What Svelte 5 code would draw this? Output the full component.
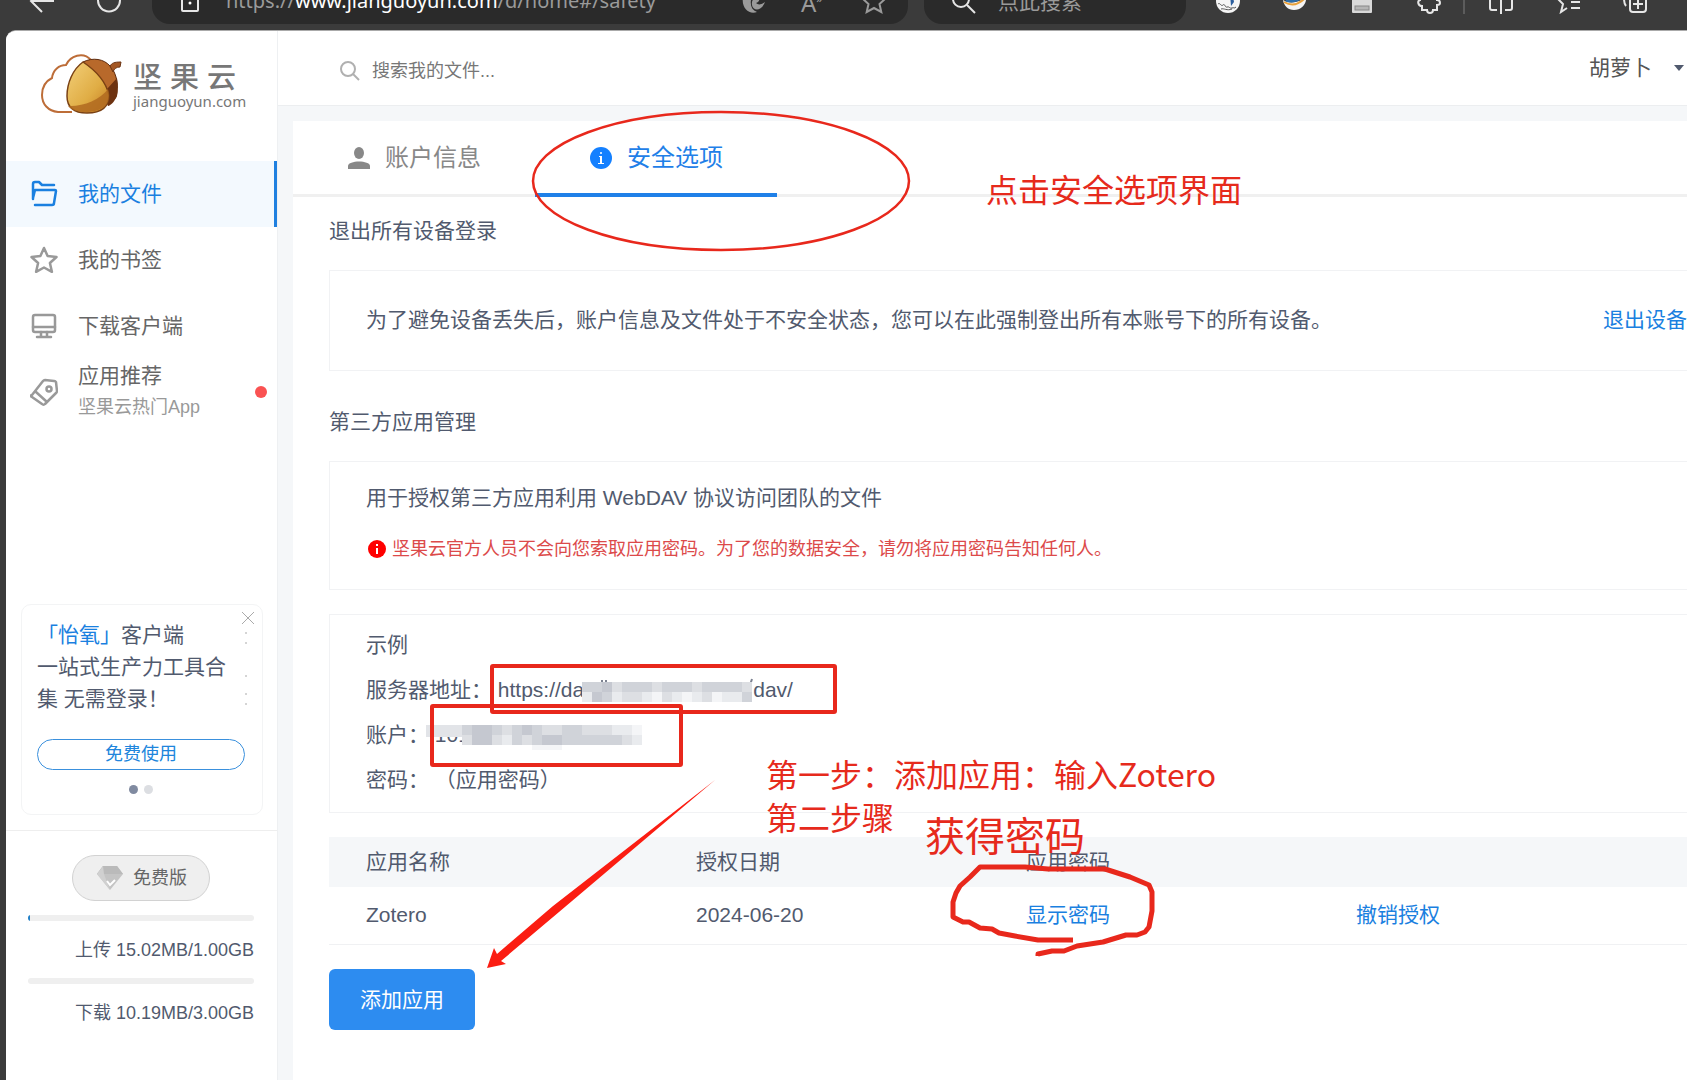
<script lang="ts">
	type NavItem = { icon: string; label: string; sub?: string; dot?: boolean };

	const nav: NavItem[] = [
		{ icon: 'folder', label: '我的文件' },
		{ icon: 'star', label: '我的书签' },
		{ icon: 'screen', label: '下载客户端' },
		{ icon: 'tag', label: '应用推荐', sub: '坚果云热门App', dot: true },
	];

	const usage = [
		{ label: '上传', used: '15.02MB', total: '1.00GB', percent: 1 },
		{ label: '下载', used: '10.19MB', total: '3.00GB', percent: 0 },
	];

	const apps = [{ name: 'Zotero', date: '2024-06-20' }];

	let activeNav = $state('我的文件');
	let activeTab = $state('safety');

	// grey tones of the blurred-out blocks, one digit per cell
	const tones = ['#f4f5f7', '#e9ebee', '#dddfe3', '#d0d3d9', '#c5c8d0'];
	const urlMosaic = ['33423332333233332', '14312210210120113'];
	const userMosaic = ['344323432233222110', '244213234433333321', '.......000........'];
</script>

{#snippet mosaic(rows: string[], left: number, top: number)}
	{#each rows as row, y}
		{#each row.split('') as tone, x}
			{#if tone !== '.'}
				<rect x={left + x * 10} y={top + y * 10} width="10" height={y < 2 ? 10 : 5} fill={tones[+tone]} />
			{/if}
		{/each}
	{/each}
{/snippet}

<div class="window">
	<div class="toolbar">
		<button class="tool back" aria-label="后退">
			<svg width="26" height="26" viewBox="0 0 26 26"><path d="M25 13H2M13 2 2 13l11 11" /></svg>
		</button>
		<button class="tool reload" aria-label="刷新">
			<svg width="26" height="26" viewBox="0 0 26 26"><path d="M20 4a11 11 0 1 1-14 0" /></svg>
		</button>
		<div class="address">
			<svg class="lock" width="20" height="26" viewBox="0 0 20 26">
				<path d="M5 8V5a5 5 0 0 1 10 0v3M3 8h14a1 1 0 0 1 1 1v13a1 1 0 0 1-1 1H3a1 1 0 0 1-1-1V9a1 1 0 0 1 1-1z" />
				<circle cx="10" cy="15" r="1.5" fill="#fff" stroke="none" />
			</svg>
			<span class="url">https://<b>www.jianguoyun.com</b>/d/home#/safety</span>
			<svg class="dim" width="26" height="26" viewBox="0 0 26 26">
				<path d="M2 9c3 1 6 1 8 3-1 6 1 10 6 12C8 27 0 20 2 9z" fill="#9a9a9a" stroke="none" />
				<path d="M11 17c1 6 9 7 13-3-4 3-7 3-9 1 3-1 4-3 3-6-3-1-8 2-7 8z" fill="#9a9a9a" stroke="none" />
				<path d="M4 7c5-4 11-1 11 3h9C23 2 9-2 4 7z" fill="#9a9a9a" stroke="none" />
			</svg>
			<span class="reader">A<sup>»</sup></span>
			<svg class="dim" width="26" height="26" viewBox="0 0 26 26">
				<path d="m13 2 3.500 7.500 8 1-6 5.500 1.800 8L13 20l-7.300 4 1.800-8-6-5.500 8-1z" />
			</svg>
		</div>
		<div class="quick">
			<svg width="26" height="26" viewBox="0 0 26 26"><circle cx="10" cy="11" r="8" /><path d="m16 17 8 8" /></svg>
			<span>点此搜索</span>
		</div>
		<div class="tools">
			<button class="tool" aria-label="扩展 1">
				<svg width="26" height="26" viewBox="0 0 26 26">
					<circle cx="13" cy="13" r="12" fill="#f5f5f5" stroke="none" />
					<path d="M17 4l2 10-3 4-1-12z" fill="#2c5f9e" stroke="none" />
					<path d="M3 16c2-2 3 3 5 1s2 3 4 2 3 2 5 1 2 1 4-1M6 21c3-1 6 2 11 0" stroke="#555" stroke-width="1" />
				</svg>
			</button>
			<button class="tool" aria-label="扩展 2">
				<svg width="26" height="26" viewBox="0 0 26 26">
					<path d="M1 12c6 4 16 3 23-3 1 6-4 13-12 13-6 0-10-4-11-10z" fill="#f4f4f4" stroke="none" />
					<path d="M2 14c7 4 15 3 22-5" stroke="#e9a13a" stroke-width="2" />
					<path d="M4 12c5 2 12 1 16-4" stroke="#2c6da8" stroke-width="3" />
				</svg>
			</button>
			<button class="tool" aria-label="扩展 3">
				<svg width="26" height="26" viewBox="0 0 26 26">
					<rect x="3" y="1" width="20" height="24" rx="1" fill="#d9d9d9" stroke="none" />
					<rect x="6" y="18" width="14" height="4" fill="#b5b5b5" stroke="#888" stroke-width="1" />
				</svg>
			</button>
			<button class="tool" aria-label="扩展">
				<svg width="26" height="26" viewBox="0 0 26 26">
					<path d="M4 6h5a3 3 0 0 1 7 0h5v6a3 3 0 0 1 3 3c0 2-2 2-3 2v5h-4c0 4-6 4-6 0H6v-4c-4 0-5-5-2-6z" />
				</svg>
			</button>
			<span class="rule"></span>
			<button class="tool" aria-label="分屏">
				<svg width="26" height="26" viewBox="0 0 26 26">
					<path d="M9 3H4a2 2 0 0 0-2 2v15a2 2 0 0 0 2 2h5M17 3h5a2 2 0 0 1 2 2v15a2 2 0 0 1-2 2h-5M13 0v26" />
				</svg>
			</button>
			<button class="tool" aria-label="收藏夹">
				<svg width="26" height="26" viewBox="0 0 26 26">
					<path d="m12 20-6 4 2-8-6-6 8-1 3-7 3 7M16 14h9M16 20h9" />
				</svg>
			</button>
			<button class="tool" aria-label="集锦">
				<svg width="26" height="26" viewBox="0 0 26 26">
					<rect x="8" y="8" width="16" height="16" rx="3" /><path d="M16 12v9M11 16h10M4 18c-2-2-2-4-2-8" />
				</svg>
			</button>
		</div>
	</div>

	<div class="page">
		<aside class="sidebar">
			<a class="logo" href="#/home">
				<svg width="84" height="62" viewBox="0 0 84 62">
					<defs>
						<linearGradient id="nut" x1="0" y1="0" x2="1" y2="1">
							<stop offset="0" stop-color="#f3d07a" />
							<stop offset="0.600" stop-color="#e0ad45" />
							<stop offset="1" stop-color="#c47a20" />
						</linearGradient>
					</defs>
					<path d="M31 59H17C7 58 1 51 1 42c0-8 4-14 10-17 1-8 7-13 14-13 4-9 17-14 25-5" fill="none" stroke="#bd6d38" stroke-width="2" />
					<path d="M44 9c4-3 16-4 24 3 8 8 10 21 8 31-2 4-5 9-9 10z" fill="#6d3210" />
					<path d="M42 9c10-5 21-3 27 4 5 5 8 15 7 22L66 37C60 27 52 16 42 9z" fill="#b8692b" stroke="#5f2d10" stroke-width="1" />
					<path d="m66 36 10-11c1 8 1 16-1 20l-8 8c2-6 1-12-1-17z" fill="#6d3210" />
					<path d="M69 13c2-3 4-4 11-4l-1 5c-4 0-6 2-7 5z" fill="#a45722" stroke="#6d3514" stroke-width="1" />
					<path d="M42 9C32 16 26 30 26 43c0 12 7 17 20 17 14 0 22-6 22-18C65 29 54 17 42 9z" fill="url(#nut)" stroke="#7a4114" stroke-width="1.500" />
					<path d="M27 53c14 1 32-6 40-17 2 8 1 14-4 18-8 6-28 8-36-1z" fill="#b06a20" opacity="0.850" />
				</svg>
				<span class="brand">
					<span class="brand-name">坚 果 云</span>
					<span class="brand-host">jianguoyun.com</span>
				</span>
			</a>

			<nav>
				{#each nav as item}
					<a href="#/{item.icon}" class="nav-item" class:active={activeNav === item.label} onclick={() => (activeNav = item.label)}>
						<svg width="28" height="28" viewBox="0 0 28 28">
							{#if item.icon === 'folder'}
								<path d="M3 19V4a2 2 0 0 1 2-2h4l3 3h12M3 18l2-8h20a1 1 0 0 1 1 1l-2 12a2 2 0 0 1-2 2H5" />
							{:else if item.icon === 'star'}
								<path d="m14 2 3.600 8 8.900 1-6.600 6 2 8.800L14 21.500l-7.900 4.300 2-8.800L1.500 11l8.900-1z" />
							{:else if item.icon === 'screen'}
								<rect x="3" y="3" width="22" height="17" rx="2" /><path d="M3 15h22M11 20v5M17 20v5M7 25h14" />
							{:else}
								<path d="M2 17 13 3a3 3 0 0 1 2-1l9 1a2 2 0 0 1 2 1l1 9a3 3 0 0 1-1 2L15 26a2 2 0 0 1-3 0L2 19a1 1 0 0 1 0-2zM6 14l11 10" />
								<circle cx="19" cy="11" r="2.500" />
							{/if}
						</svg>
						<span class="nav-text">
							{item.label}
							{#if item.sub}<small>{item.sub}</small>{/if}
						</span>
						{#if item.dot}<i class="dot"></i>{/if}
					</a>
				{/each}
			</nav>

			<section class="promo">
				<button class="close" aria-label="关闭">
					<svg width="14" height="14" viewBox="0 0 14 14"><path d="m1 1 12 12M13 1 1 13" /></svg>
				</button>
				<p><em>「怡氧」</em>客户端<br />一站式生产力工具合集 无需登录！</p>
				<svg class="peek" width="2" height="76" viewBox="0 0 2 76">
					<path d="M1 2v2M1 12v2M1 45v2M1 63v2M1 73v2" stroke="#aaa" />
				</svg>
				<button class="try">免费使用</button>
				<div class="pager"><i class="on"></i><i></i></div>
			</section>

			<section class="storage">
				<button class="plan">
					<svg width="28" height="26" viewBox="0 0 28 26">
						<path d="M7 1h14l6 8-13 16L1 9z" fill="#c4c4c4" />
						<path d="M7 1h14l6 8H1z" fill="#bababa" />
						<path d="m7 1-6 8 13 16-6-16z" fill="#d0d0d0" />
						<path d="m11 16 3 4 5-5" fill="none" stroke="#fff" stroke-width="2" />
					</svg>
					免费版
				</button>
				{#each usage as u}
					<div class="bar"><div class="fill" style="width: {u.percent}%"></div></div>
					<p>{u.label} {u.used}/{u.total}</p>
				{/each}
			</section>
		</aside>

		<div class="main">
			<header>
				<label class="search">
					<svg width="20" height="20" viewBox="0 0 20 20"><circle cx="8" cy="8" r="7" /><path d="m13 13 6 6" /></svg>
					<input type="text" placeholder="搜索我的文件..." aria-label="搜索我的文件" />
				</label>
				<button class="user">胡萝卜<i class="caret"></i></button>
			</header>

			<main>
				<div class="card">
					<div class="tabs">
						<button class:active={activeTab === 'account'} onclick={() => (activeTab = 'account')}>
							<svg width="24" height="24" viewBox="0 0 24 24">
								<ellipse cx="12" cy="7" rx="5" ry="6" /><path d="M1 23v-3c0-6 22-6 22 0v3z" />
							</svg>
							账户信息
						</button>
						<button class:active={activeTab === 'safety'} onclick={() => (activeTab = 'safety')}>
							<svg width="24" height="24" viewBox="0 0 24 24">
								<circle cx="12" cy="12" r="11" />
								<path d="M10 10h3v7h2v1h-6v-1h2v-6h-1z" fill="#fff" /><circle cx="12" cy="7" r="1" fill="#fff" />
							</svg>
							安全选项
						</button>
					</div>

					<div class="content">
						<h2>退出所有设备登录</h2>
						<div class="box logout">
							<span>为了避免设备丢失后，账户信息及文件处于不安全状态，您可以在此强制登出所有本账号下的所有设备。</span>
							<a href="#/logout">退出设备</a>
						</div>

						<h2 class="second">第三方应用管理</h2>
						<div class="box intro">
							<p>用于授权第三方应用利用 WebDAV 协议访问团队的文件</p>
							<p class="warn">
								<svg width="18" height="18" viewBox="0 0 18 18">
									<circle cx="9" cy="9" r="9" fill="#f00" /><path d="M8 8h2v6H8zM8 4h2v2H8z" fill="#fff" />
								</svg>
								坚果云官方人员不会向您索取应用密码。为了您的数据安全，请勿将应用密码告知任何人。
							</p>
						</div>

						<div class="box sample">
							<p>示例</p>
							<p>
								服务器地址： https://da<svg class="mask" width="169" height="20">
									<path d="M18 -1v2M22 -1v2M166 4l2-6" stroke="#7c8291" stroke-width="2" />
									{@render mosaic(urlMosaic, -2, 1)}
								</svg>dav/
							</p>
							<p>
								账户： 101<svg class="mask" width="180" height="20">
									<rect x="-44" y="-1" width="38" height="12" fill="#e2e4e8" />
									{@render mosaic(userMosaic, -8, -1)}
								</svg>
							</p>
							<p>密码： （应用密码）</p>
						</div>

						<table>
							<thead>
								<tr><th>应用名称</th><th>授权日期</th><th>应用密码</th><th></th></tr>
							</thead>
							<tbody>
								{#each apps as app (app.name)}
									<tr>
										<td>{app.name}</td>
										<td>{app.date}</td>
										<td><a href="#/show">显示密码</a></td>
										<td><a href="#/revoke">撤销授权</a></td>
									</tr>
								{/each}
							</tbody>
						</table>

						<button class="add">添加应用</button>
					</div>
				</div>
			</main>
		</div>
	</div>

	<!-- hand-drawn notes over the page -->
	<div class="notes">
		<svg width="100%" height="100%">
			<ellipse cx="721" cy="181" rx="188" ry="69" stroke-width="2.5" />
			<rect x="492" y="666" width="343" height="46" rx="1" stroke-width="4" />
			<rect x="432" y="706" width="249" height="59" rx="1" stroke-width="4" />
			<path class="solid" d="m487 968 7-20 3 6 56-48L715 780 559 912l-58 49 5 3z" />
			<path
				stroke-width="5"
				d="M1073 940h-35l-23-4-16-3-7-4-12-1-11-6h-6l-10-5v-15l3-9 4-7 10-9 10-10h45l23 2h57l25 8 19 8 3 7v19l-3 16-4 5-8 3h-11l-23 7-26 4-13 5h-12l-14 3v2"
			/>
		</svg>
		<span class="note tab-note">点击安全选项界面</span>
		<span class="note step-note">第一步：添加应用：输入Zotero<br />第二步骤</span>
		<span class="note password-note">获得密码</span>
	</div>
</div>

<style>
	:global(body) {
		margin: 0;
		background: #3b3b3b;
	}
	.window {
		position: relative;
		min-height: 100vh;
		display: flex;
		flex-direction: column;
		overflow: hidden;
		background: #3b3b3b;
		color: #515a6e;
		font-family: 'Liberation Sans', 'Noto Sans CJK SC', sans-serif;
		font-size: 21px;
		line-height: 30px;
	}
	p, h2 {
		margin: 0;
		font-size: inherit;
		font-weight: 400;
	}
	a {
		color: #1a80e0;
		text-decoration: none;
	}
	button {
		padding: 0;
		border: 0;
		background: none;
		color: inherit;
		font: inherit;
		cursor: pointer;
	}
	svg {
		flex: none;
	}

	/* browser toolbar, its upper half is scrolled out of view */
	.toolbar {
		display: flex;
		align-items: center;
		height: 46px;
		margin-top: -22px;
		padding: 0 19px 6px 29px;
	}
	.toolbar svg {
		fill: none;
		stroke: #e6e6e6;
		stroke-width: 2;
	}
	.tool {
		display: flex;
		justify-content: center;
	}
	.reload {
		margin: 0 30px 0 41px;
	}
	.address, .quick {
		display: flex;
		align-items: center;
		box-sizing: border-box;
		height: 46px;
		border-radius: 18px;
		background: #2a2a2a;
		color: #9a9a9a;
		font-family: 'Noto Sans', 'Noto Sans CJK SC', sans-serif;
	}
	.address {
		flex: 1;
		gap: 34px;
		padding: 0 21px 0 28px;
	}
	.toolbar .dim {
		stroke: #9a9a9a;
	}
	.url {
		flex: 1;
		margin-left: -8px;
		font-size: 20px;
	}
	.url b {
		color: #fff;
		font-weight: 400;
	}
	.reader {
		width: 26px;
		font-size: 24px;
	}
	.reader sup {
		font-size: 12px;
	}
	.quick {
		width: 262px;
		gap: 21px;
		margin: 0 8px 0 16px;
		padding-left: 27px;
	}
	.tools {
		display: flex;
		align-items: center;
	}
	.tools .tool {
		width: 67px;
	}
	.rule {
		width: 2px;
		height: 26px;
		margin: 0 2px 0 1px;
		background: #5c5c5c;
	}

	.page {
		flex: 1;
		display: flex;
		margin-left: 6px;
		border-top: 1px solid #aaa;
		border-top-left-radius: 10px;
		overflow: hidden;
		background: #fff;
	}

	.sidebar {
		width: 271px;
		flex: none;
		display: flex;
		flex-direction: column;
		border-right: 1px solid #eef0f2;
		background: #fff;
	}
	.logo {
		display: flex;
		gap: 8px;
		padding: 22px 0 46px 35px;
		color: #777;
	}
	.brand {
		display: flex;
		flex-direction: column;
		padding-top: 4px;
	}
	.brand-name {
		font-size: 29px;
		line-height: 42px;
		font-weight: 500;
	}
	.brand-host {
		font-family: 'Noto Sans', sans-serif;
		font-size: 15px;
		line-height: 4px;
	}
	.nav-item {
		display: flex;
		align-items: center;
		gap: 20px;
		height: 66px;
		box-sizing: border-box;
		padding: 0 10px 0 24px;
		color: #666;
	}
	.nav-item svg {
		fill: none;
		stroke: #999;
		stroke-width: 2.5;
		stroke-linejoin: round;
		stroke-linecap: round;
	}
	.nav-item.active {
		border-right: 3px solid #1f80e0;
		background: #f3f9fe;
		color: #1a80e0;
	}
	.nav-item.active svg {
		stroke: #1a80e0;
	}
	.nav-text {
		flex: 1;
	}
	.nav-text small {
		display: block;
		color: #999;
		font-size: 18px;
		line-height: 32px;
	}
	.dot {
		width: 12px;
		height: 12px;
		border-radius: 50%;
		background: #fa5252;
	}

	.promo {
		position: relative;
		margin: auto 14px 15px 15px;
		padding: 14px 17px 20px 15px;
		border: 1px solid #f3f4f5;
		border-radius: 10px;
	}
	.promo p {
		width: 192px;
		line-height: 32px;
	}
	.promo em {
		color: #1a80e0;
		font-style: normal;
	}
	.close {
		position: absolute;
		top: 6px;
		right: 7px;
		line-height: 0;
	}
	.close svg {
		stroke: #aaa;
	}
	.peek {
		position: absolute;
		top: 25px;
		right: 15px;
	}
	.try {
		width: 100%;
		margin-top: 24px;
		border: 1px solid #3a90dd;
		border-radius: 16px;
		color: #2085dc;
		font-size: 18px;
		line-height: 29px;
	}
	.pager {
		display: flex;
		justify-content: center;
		gap: 6px;
		margin-top: 15px;
	}
	.pager i {
		width: 9px;
		height: 9px;
		border-radius: 50%;
		background: #dcdee2;
	}
	.pager .on {
		background: #808aa0;
	}

	.storage {
		display: flex;
		flex-direction: column;
		padding: 24px 23px 52px 22px;
		border-top: 1px solid #eee;
		font-size: 18px;
	}
	.plan {
		display: flex;
		align-items: center;
		align-self: center;
		gap: 9px;
		height: 46px;
		margin: 0 0 14px;
		padding: 0 22px 0 23px;
		border: 1px solid #d2d2d2;
		border-radius: 23px;
		background: #efefef;
		color: #666;
	}
	.bar {
		height: 6px;
		border-radius: 3px;
		overflow: hidden;
		background: #efefef;
	}
	.fill {
		height: 6px;
		background: #2080c8;
	}
	.storage p {
		padding: 14px 0 13px;
		text-align: right;
	}
	.storage p:last-child {
		padding-bottom: 0;
	}

	.main {
		flex: 1;
		min-width: 0;
		display: flex;
		flex-direction: column;
	}
	header {
		display: flex;
		align-items: center;
		justify-content: space-between;
		height: 74px;
		padding: 0 3px 0 62px;
		border-bottom: 1px solid #eceef0;
	}
	.search {
		display: flex;
		align-items: center;
		gap: 12px;
		padding-top: 5px;
	}
	.search svg {
		fill: none;
		stroke: #b0b0b0;
		stroke-width: 2;
	}
	.search input {
		width: 400px;
		padding: 0;
		border: 0;
		outline: 0;
		font: inherit;
		font-size: 18px;
	}
	.search input::placeholder {
		color: #777;
	}
	.user {
		display: flex;
		align-items: center;
		gap: 22px;
		color: #555;
	}
	.caret {
		border: 5px solid transparent;
		border-top: 6px solid #515a6e;
		border-bottom: 0;
	}
	main {
		flex: 1;
		display: flex;
		padding: 15px 0 0 15px;
		background: #f5f7f9;
	}
	.card {
		flex: 1;
		min-width: 0;
		background: #fff;
	}
	.tabs {
		display: flex;
		border-bottom: 3px solid #f0f0f0;
	}
	.tabs button {
		display: flex;
		align-items: center;
		justify-content: center;
		gap: 14px;
		width: 242px;
		height: 76px;
		margin-bottom: -3px;
		padding-top: 2px;
		border-bottom: 4px solid transparent;
		color: #888;
		font-size: 24px;
	}
	.tabs svg {
		fill: #888;
	}
	.tabs .active {
		border-bottom-color: #1f80e8;
		color: #1f80e8;
	}
	.tabs .active svg {
		fill: #1480ff;
	}
	.content {
		padding: 19px 0 24px 36px;
	}
	h2 {
		margin-bottom: 24px;
	}
	.second {
		margin-top: 36px;
	}
	.box {
		border: 1px solid #f1f2f4;
		border-right: 0;
		padding-left: 36px;
	}
	.logout {
		display: flex;
		justify-content: space-between;
		padding-top: 34px;
		padding-bottom: 35px;
	}
	.intro {
		padding-top: 21px;
		padding-bottom: 26px;
	}
	.warn {
		display: flex;
		align-items: center;
		gap: 6px;
		margin-top: 22px;
		padding-left: 2px;
		color: #dc4a4a;
		font-size: 18px;
		line-height: 28px;
	}
	.sample {
		margin: 24px 0;
		padding-top: 7px;
		padding-bottom: 10px;
		line-height: 45px;
	}
	.mask {
		position: relative;
		overflow: visible;
		vertical-align: middle;
	}
	table {
		width: 100%;
		table-layout: fixed;
		border-collapse: collapse;
	}
	th, td {
		width: 293px;
		padding: 10px 0 10px 37px;
		font-weight: 400;
		text-align: left;
	}
	th:last-child {
		width: auto;
	}
	thead {
		background: #f5f7f9;
	}
	td {
		padding-top: 13px;
		padding-bottom: 14px;
		border-bottom: 1px solid #f0f1f3;
	}
	.add {
		margin-top: 24px;
		padding: 0 31px;
		border-radius: 6px;
		background: #2d8cf0;
		color: #fff;
		line-height: 61px;
	}

	.notes {
		position: absolute;
		inset: 0;
		pointer-events: none;
		color: #e62a1c;
	}
	.notes svg {
		display: block;
		fill: none;
		stroke: #e8281c;
		stroke-linejoin: round;
	}
	.notes .solid {
		fill: #fb1d12;
		stroke: none;
	}
	.note {
		position: absolute;
		font-family: 'Noto Sans CJK SC', sans-serif;
		font-size: 32px;
		line-height: 43px;
		white-space: nowrap;
	}
	.tab-note {
		left: 986px;
		top: 167px;
	}
	.step-note {
		left: 766px;
		top: 752px;
	}
	.password-note {
		left: 925px;
		top: 813px;
		font-size: 40px;
	}
</style>
